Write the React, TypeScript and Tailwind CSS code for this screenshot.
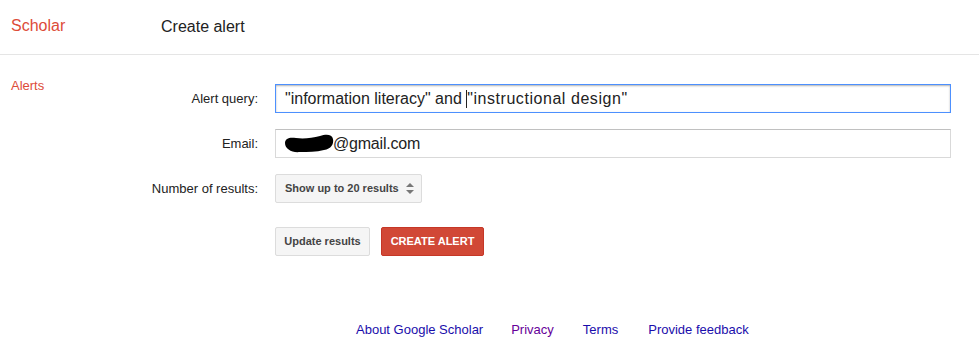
import React from "react";

const fontStack = { fontFamily: '"Liberation Sans", Arial, sans-serif' };

const Label = ({ children }: { children: React.ReactNode }) => (
  <div className="w-[108px] shrink-0 text-right text-[13px] text-[#222]">
    {children}
  </div>
);

const App = () => {
  return (
    <div className="min-h-[358px] w-full bg-white" style={fontStack}>
      <header className="flex h-[55px] items-center border-b border-[#e5e5e5]">
        <div className="w-[161px] pb-[3px] pl-[11px] text-[16px] text-[#dd4b39]">
          Scholar
        </div>
        <div className="pb-[1px] text-[16px] text-[#222]">Create alert</div>
      </header>

      <div className="flex">
        <div className="w-[150px] shrink-0 pl-[11px] pt-[21px] text-[13px] text-[#dd4b39]">
          Alerts
        </div>

        <div className="flex flex-1 flex-col pr-[28px] pt-[29px]">
          <div className="flex items-center gap-[17px]">
            <Label>Alert query:</Label>
            <div className="flex h-[29px] flex-1 items-center border border-[#4d90fe] pl-[9px] text-[16px] text-[#222] shadow-[inset_0_1px_2px_rgba(0,0,0,0.3)]">
              <span className="whitespace-pre">"information literacy" and </span>
              <span className="h-[18px] w-px bg-[#222]" />
              <span className="tracking-[0.55px]">"instructional design"</span>
            </div>
          </div>

          <div className="mt-[16px] flex items-center gap-[17px]">
            <Label>Email:</Label>
            <div className="flex h-[29px] flex-1 items-center border border-[#d9d9d9] border-t-[#c0c0c0] pl-[8px] text-[16px] tracking-[-0.2px] text-[#222]">
              <svg width="50" height="20" viewBox="0 0 50 20" className="shrink-0">
                <path
                  d="M1 9 C1 4 6 3 12 4 C20 5 28 4 36 2 C42 0 48 0 49 5 C50 10 47 15 40 16 C32 18 24 18 16 18 C8 19 1 15 1 9 Z"
                  fill="#000"
                />
              </svg>
              <span className="-ml-[1px]">@gmail.com</span>
            </div>
          </div>

          <div className="mt-[16px] flex items-center gap-[17px]">
            <Label>Number of results:</Label>
            <div className="flex h-[29px] w-[147px] items-center rounded-[2px] border border-[#dcdcdc] bg-[#f5f5f5] pl-[9px] text-[11px] font-bold text-[#444]">
              <span>Show up to 20 results</span>
              <svg width="8" height="11" viewBox="0 0 8 11" className="ml-[7px]">
                <path d="M4 0 L8 4 L0 4 Z" fill="#777" />
                <path d="M4 11 L8 7 L0 7 Z" fill="#777" />
              </svg>
            </div>
          </div>

          <div className="mt-[24px] flex items-center gap-[17px]">
            <div className="w-[108px] shrink-0" />
            <div className="flex gap-[11px]">
              <button className="flex h-[29px] w-[95px] items-center justify-center rounded-[2px] border border-[#dcdcdc] bg-[#f5f5f5] text-[11px] font-bold text-[#444]">
                Update results
              </button>
              <button className="flex h-[29px] w-[103px] items-center justify-center rounded-[2px] border border-[#c53727] bg-[#d14836] text-[11px] font-bold text-white">
                CREATE ALERT
              </button>
            </div>
          </div>
        </div>
      </div>

      <footer className="mt-[64px] flex pl-[356px] text-[13px]">
        <a className="text-[#1a0dab]">About Google Scholar</a>
        <a className="ml-[28px] text-[#660099]">Privacy</a>
        <a className="ml-[29px] text-[#1a0dab]">Terms</a>
        <a className="ml-[30px] text-[#1a0dab]">Provide feedback</a>
      </footer>
    </div>
  );
};

export default App;
